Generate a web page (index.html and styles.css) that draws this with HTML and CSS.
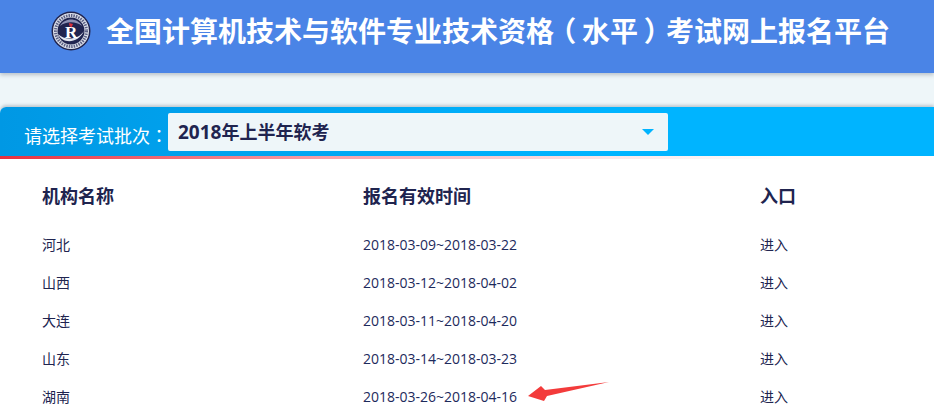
FILE: index.html
```html
<!DOCTYPE html>
<html lang="zh-CN">
<head>
  <meta charset="UTF-8" />
  <title>全国计算机技术与软件专业技术资格（水平）考试网上报名平台</title>
  <link rel="stylesheet" href="styles.css">
</head>
<body>

  <!-- 顶部标题 -->
  <header class="top-bar">
    <svg class="logo" width="40" height="40" viewBox="0 0 40 40">
      <circle cx="20" cy="20" r="19.500" fill="#20244f"/>
      <circle cx="20" cy="20" r="18" fill="#dfe3ec"/>
      <circle cx="20" cy="20" r="15.500" fill="none" stroke="#5d6185" stroke-width="3" stroke-dasharray="1.500 1"/>
      <circle cx="20" cy="20" r="13.500" fill="#20244f"/>
      <path d="M7 23 C11 33 27 33 33 20 C27 29 14 30 7 23Z" fill="#e4e7f0"/>
      <path d="M9 15 C13 7 26 6 31 15 C25 10 15 10 9 15Z" fill="#8d92b5"/>
      <text class="logo-r" x="14" y="27">R</text>
      <path d="M18 12 l4 1 -1.500 3.500 -2 -1.500z" fill="#d8303c"/>
    </svg>
    <h1 class="top-title">全国计算机技术与软件专业技术资格<span class="paren">（</span>水平<span class="paren">）</span>考试网上报名平台</h1>
  </header>

  <main class="panel">
    <!-- 批次选择 -->
    <div class="batch-bar">
      <span class="batch-label">请选择考试批次<span class="punct" lang="zh-TW">：</span></span>
      <div class="batch-select">
        <span><span class="batch-year">2018</span>年上半年软考</span>
        <span class="batch-caret"></span>
      </div>
    </div>
    <div class="red-line"></div>

    <!-- 机构列表 -->
    <table class="org-table">
      <thead>
        <tr><th class="col-name">机构名称</th><th class="col-time">报名有效时间</th><th>入口</th></tr>
      </thead>
      <tbody>
        <tr><td>河北</td><td class="date">2018-03-09~2018-03-22</td><td>进入</td></tr>
        <tr><td>山西</td><td class="date">2018-03-12~2018-04-02</td><td>进入</td></tr>
        <tr><td>大连</td><td class="date">2018-03-11~2018-04-20</td><td>进入</td></tr>
        <tr><td>山东</td><td class="date">2018-03-14~2018-03-23</td><td>进入</td></tr>
        <tr><td>湖南</td><td class="date">2018-03-26~2018-04-16</td><td>进入</td></tr>
      </tbody>
    </table>
  </main>

  <!-- 红色箭头标注 -->
  <svg class="note-arrow" width="84" height="22" viewBox="0 0 84 22">
    <path d="M1 15 L14 5 L18 9 L82 1 L20 15 L17 20Z" fill="#f33b3b"/>
  </svg>

</body>
</html>
```

FILE: styles.css
```css
html, body {
  height: 417px;
  overflow: hidden;
}

body {
  margin: 0;
  position: relative;
  font-family: "Liberation Sans", "Noto Sans CJK SC", sans-serif;
  background: #eef6f9;
  color: #20244f;
}

.punct {
  font-family: "Noto Sans CJK TC", sans-serif;
}

.paren {
  display: inline-block;
  width: 1em;
  text-align: center;
  font-feature-settings: "palt";
}

.top-bar {
  height: 73px;
  box-sizing: border-box;
  padding: 11px 0 0 51px;
  display: flex;
  align-items: flex-start;
  gap: 15px;
  background-color: #4a84e6;
  box-shadow: 0 2px 4px rgba(60, 70, 90, 0.3);
}

.logo {
  flex: none;
}

.logo-r {
  font-family: "Liberation Serif", serif;
  font-size: 17px;
  font-weight: bold;
  fill: #fff;
}

.top-title {
  margin: 0;
  color: #fff;
  font-size: 28px;
  font-weight: bold;
  line-height: 44px;
  white-space: nowrap;
}

.panel {
  margin-top: 34px;
  background: #fff;
  height: 310px;
  border-radius: 6px 0 0 0;
  box-shadow: 0 -2px 3px rgba(60, 70, 90, 0.25);
}

.batch-bar {
  height: 49px;
  box-sizing: border-box;
  padding: 6px 0 0 24px;
  display: flex;
  background: linear-gradient(to right, #0098e4, #00b4ff 65%);
  border-radius: 6px 0 0 0;
}

.batch-label {
  width: 144px;
  color: #fff;
  font-size: 18px;
  font-weight: normal;
  line-height: 44px;
  white-space: nowrap;
}

.batch-select {
  width: 500px;
  height: 38px;
  box-sizing: border-box;
  padding: 0 14px 2px 10px;
  display: flex;
  justify-content: space-between;
  align-items: center;
  background: #eef6f9;
  border-radius: 2px;
  font-size: 18px;
  font-weight: bold;
}

.batch-year {
  font-family: "Open Sans", sans-serif;
  font-size: 19px;
}

.batch-caret {
  width: 0;
  height: 0;
  margin-top: 2px;
  border-left: 6px solid transparent;
  border-right: 6px solid transparent;
  border-top: 6px solid #00b4ff;
}

.red-line {
  height: 3px;
  background: linear-gradient(to right, #e8303f, #f8a0a8 35%, #fbe6e8 65%, #fff 85%);
}

.org-table {
  width: 100%;
  border-collapse: collapse;
  table-layout: fixed;
}

.org-table th {
  height: 60px;
  padding: 6px 0 0;
  text-align: left;
  font-size: 18px;
  font-weight: bold;
}

.org-table td {
  height: 38px;
  padding: 0;
  font-size: 14px;
}

.org-table th:first-child,
.org-table td:first-child {
  padding-left: 42px;
}

.col-name {
  width: 321px;
}

.col-time {
  width: 397px;
}

.org-table .date {
  font-family: "Open Sans", sans-serif;
  font-size: 14px;
  color: #1d2a5c;
}

.note-arrow {
  position: absolute;
  left: 527px;
  top: 381px;
}
```
